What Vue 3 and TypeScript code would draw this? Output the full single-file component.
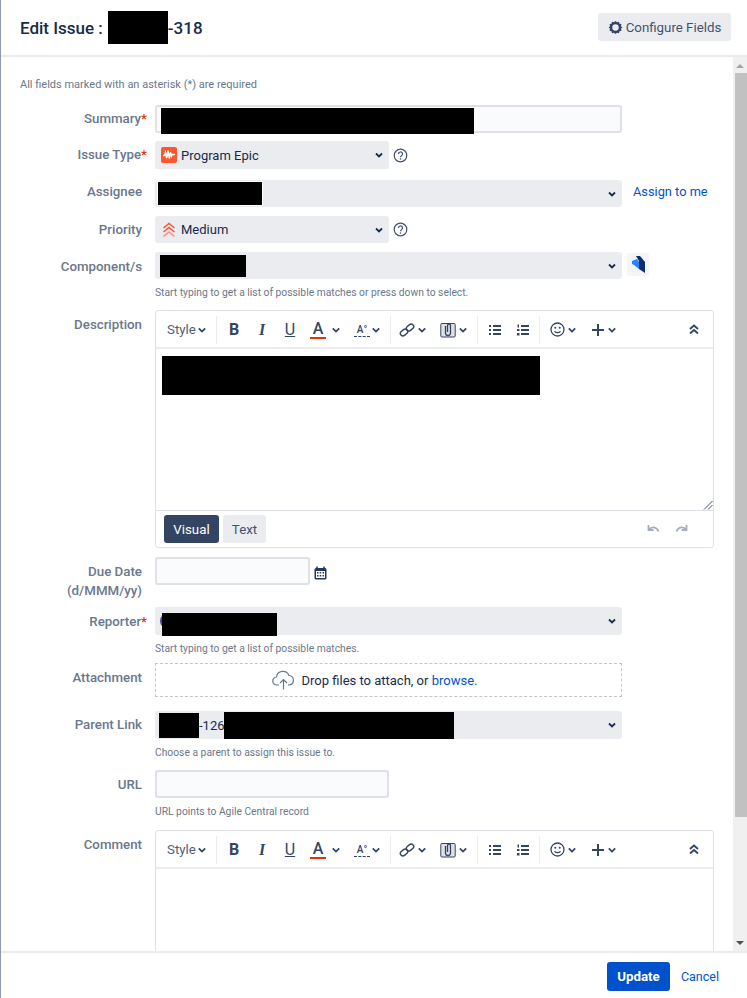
<template>
  <div class="dialog">
    <header class="top">
      <h1>Edit Issue :<span class="redact title-redact"></span>-318</h1>
      <button class="config">
        <svg width="15" height="15" viewBox="0 0 16 16"><path d="M8 1l1.600 1.500 2.100-.6.600 2.100 2.100.6-.6 2.100L15.300 8l-1.500 1.300.6 2.100-2.100.6-.6 2.100-2.100-.6L8 15l-1.600-1.500-2.100.6-.6-2.100-2.100-.6.6-2.100L.7 8l1.500-1.300-.6-2.100 2.100-.6.6-2.100 2.100.6z" fill="#344563"/><circle cx="8" cy="8" r="3.400" fill="#ebecf0"/></svg>
        Configure Fields
      </button>
    </header>

    <div class="middle">
      <main class="body">
        <p class="required-note">All fields marked with an asterisk (*) are required</p>

        <div class="row summary-row">
          <label>Summary<em>*</em></label>
          <div class="input wide"><span class="redact summary-redact"></span></div>
        </div>

        <div class="row issue-row">
          <label>Issue Type<em>*</em></label>
          <div class="select narrow">
            <svg class="type-icon" width="16" height="16" viewBox="0 0 16 16"><rect width="16" height="16" rx="2" fill="#ff5630"/><path d="M2 8.500h1.500l1-3 1.200 5.500L7 3.500l1.300 8 1.200-6 1 3.500.8-1.500H14" fill="none" stroke="#fff" stroke-width="1.500"/></svg>
            <span>Program Epic</span>
            <svg class="chev" width="10" height="10" viewBox="0 0 10 10"><path d="M2 3.500l3 3 3-3" fill="none" stroke="#172b4d" stroke-width="1.800"/></svg>
          </div>
          <svg class="help" width="15" height="15" viewBox="0 0 15 15"><circle cx="7.500" cy="7.500" r="6.300" fill="none" stroke="#42526e" stroke-width="1.200"/><path d="M5.500 6a2 2 0 1 1 3 1.700c-.7.400-1 .7-1 1.500" fill="none" stroke="#42526e" stroke-width="1.200"/><circle cx="7.500" cy="11" r=".8" fill="#42526e"/></svg>
        </div>

        <div class="row assignee-row">
          <label>Assignee</label>
          <div class="select wide">
            <span class="redact assignee-redact"></span>
            <svg class="chev" width="10" height="10" viewBox="0 0 10 10"><path d="M2 3.500l3 3 3-3" fill="none" stroke="#172b4d" stroke-width="1.800"/></svg>
          </div>
          <a class="side-link">Assign to me</a>
        </div>

        <div class="row priority-row">
          <label>Priority</label>
          <div class="select narrow">
            <svg class="type-icon" width="16" height="16" viewBox="0 0 16 16"><g fill="none" stroke="#ff5630" stroke-width="1.600"><path d="M2.500 6L8 1.500 13.500 6"/><path d="M2.500 10L8 5.500 13.500 10"/><path d="M2.500 14.500L8 10l5.500 4.500" stroke="#ff8f73"/></g></svg>
            <span>Medium</span>
            <svg class="chev" width="10" height="10" viewBox="0 0 10 10"><path d="M2 3.500l3 3 3-3" fill="none" stroke="#172b4d" stroke-width="1.800"/></svg>
          </div>
          <svg class="help" width="15" height="15" viewBox="0 0 15 15"><circle cx="7.500" cy="7.500" r="6.300" fill="none" stroke="#42526e" stroke-width="1.200"/><path d="M5.500 6a2 2 0 1 1 3 1.700c-.7.400-1 .7-1 1.500" fill="none" stroke="#42526e" stroke-width="1.200"/><circle cx="7.500" cy="11" r=".8" fill="#42526e"/></svg>
        </div>

        <div class="row component-row">
          <label>Component/s</label>
          <div class="select wide">
            <span class="redact component-redact"></span>
            <svg class="chev" width="10" height="10" viewBox="0 0 10 10"><path d="M2 3.500l3 3 3-3" fill="none" stroke="#172b4d" stroke-width="1.800"/></svg>
          </div>
          <span class="component-badge">
            <svg width="14" height="17" viewBox="0 0 14 17"><path d="M5 0h4l5 6v11l-6-4V5z" fill="#0c2f6e"/><path d="M1 5l5-2 2 3v7L3 9 1 8z" fill="#2684ff"/></svg>
          </span>
        </div>
        <p class="hint">Start typing to get a list of possible matches or press down to select.</p>

        <div class="row description-row">
          <label>Description</label>
          <div class="editor">
            <div class="toolbar">
              <span class="tb-style">Style<svg class="mini" width="8" height="8" viewBox="0 0 10 10"><path d="M1 3l4 4 4-4" fill="none" stroke="#344563" stroke-width="2.200"/></svg></span>
              <i class="sep"></i>
              <span class="tb-glyph bold">B</span>
              <span class="tb-glyph italic">I</span>
              <span class="tb-glyph under">U</span>
              <span class="tb-glyph color"><b>A</b><svg class="mini" width="8" height="8" viewBox="0 0 10 10"><path d="M1 3l4 4 4-4" fill="none" stroke="#344563" stroke-width="2.200"/></svg></span>
              <span class="tb-glyph more"><b>A°</b><svg class="mini" width="8" height="8" viewBox="0 0 10 10"><path d="M1 3l4 4 4-4" fill="none" stroke="#344563" stroke-width="2.200"/></svg></span>
              <i class="sep"></i>
              <span class="tb-icon link-btn"><svg width="16" height="16" viewBox="0 0 16 16"><g fill="none" stroke="#344563" stroke-width="1.400"><rect x="1" y="8" width="8" height="5" rx="2.500" transform="rotate(-40 5 10.500)"/><rect x="7" y="3" width="8" height="5" rx="2.500" transform="rotate(-40 11 5.500)"/></g></svg><svg class="mini" width="8" height="8" viewBox="0 0 10 10"><path d="M1 3l4 4 4-4" fill="none" stroke="#344563" stroke-width="2.200"/></svg></span>
              <span class="tb-icon"><svg width="16" height="16" viewBox="0 0 16 16"><rect x=".8" y="1.500" width="14.400" height="13.500" rx="1" fill="#dfe1e6" stroke="#344563"/><path d="M5.500 4v7a2.500 2.500 0 0 0 5 0V3.500a1.500 1.500 0 0 0-3 0V10" fill="none" stroke="#344563" stroke-width="1.300"/></svg><svg class="mini" width="8" height="8" viewBox="0 0 10 10"><path d="M1 3l4 4 4-4" fill="none" stroke="#344563" stroke-width="2.200"/></svg></span>
              <i class="sep"></i>
              <span class="tb-icon"><svg width="14" height="14" viewBox="0 0 14 14"><g fill="#344563"><rect x="1" y="2" width="2" height="2"/><rect x="1" y="6" width="2" height="2"/><rect x="1" y="10" width="2" height="2"/><rect x="5" y="2" width="8" height="2"/><rect x="5" y="6" width="8" height="2"/><rect x="5" y="10" width="8" height="2"/></g></svg></span>
              <span class="tb-icon solo"><svg width="14" height="14" viewBox="0 0 14 14"><g fill="#344563"><rect x="1.500" y="1.500" width="1.500" height="3"/><rect x="1" y="6" width="2.500" height="2"/><rect x="1" y="10" width="2.500" height="2.500"/><rect x="5" y="2" width="8" height="2"/><rect x="5" y="6" width="8" height="2"/><rect x="5" y="10" width="8" height="2"/></g></svg></span>
              <i class="sep"></i>
              <span class="tb-icon"><svg width="15" height="15" viewBox="0 0 15 15"><circle cx="7.500" cy="7.500" r="6.500" fill="none" stroke="#344563" stroke-width="1.300"/><circle cx="5.300" cy="5.800" r="1" fill="#344563"/><circle cx="9.700" cy="5.800" r="1" fill="#344563"/><path d="M4.500 9.300c1.500 1.800 4.500 1.800 6 0" fill="none" stroke="#344563" stroke-width="1.200"/></svg><svg class="mini" width="8" height="8" viewBox="0 0 10 10"><path d="M1 3l4 4 4-4" fill="none" stroke="#344563" stroke-width="2.200"/></svg></span>
              <span class="tb-icon plus-btn"><svg width="14" height="14" viewBox="0 0 14 14"><path d="M7 1v12M1 7h12" stroke="#344563" stroke-width="2"/></svg><svg class="mini" width="8" height="8" viewBox="0 0 10 10"><path d="M1 3l4 4 4-4" fill="none" stroke="#344563" stroke-width="2.200"/></svg></span>
              <span class="collapse"><svg width="10" height="11" viewBox="0 0 10 11"><path d="M1 5l4-3.500L9 5M1 9.500L5 6l4 3.500" fill="none" stroke="#344563" stroke-width="1.800"/></svg></span>
            </div>
            <div class="edit-area">
              <span class="redact description-redact"></span>
              <svg class="grip" width="10" height="10" viewBox="0 0 10 10"><path d="M1 9.500L9.500 1M5 9.500L9.500 5" stroke="#42526e"/></svg>
            </div>
            <div class="editor-foot">
              <button class="tab active">Visual</button>
              <button class="tab">Text</button>
              <span class="history">
                <svg width="15" height="10" viewBox="0 0 15 10"><path d="M2.500 1v5h5M2.500 6c3-4 8-3.500 10 1.500" fill="none" stroke="#a5adba" stroke-width="1.800"/></svg>
                <svg width="15" height="10" viewBox="0 0 15 10"><path d="M12.500 1v5h-5M12.500 6c-3-4-8-3.500-10 1.500" fill="none" stroke="#a5adba" stroke-width="1.800"/></svg>
              </span>
            </div>
          </div>
        </div>

        <div class="row due-row">
          <label>Due Date<br>(d/MMM/yy)</label>
          <div class="input date"></div>
          <svg class="cal" width="13" height="14" viewBox="0 0 13 14"><rect x=".5" y="2" width="12" height="11.500" rx="1.500" fill="#253858"/><rect x="2" y="5" width="9" height="7" fill="#fff"/><path d="M3 .5v2M10 .5v2" stroke="#253858" stroke-width="1.500"/><g fill="#253858"><rect x="3" y="6" width="1.500" height="1.500"/><rect x="5.700" y="6" width="1.500" height="1.500"/><rect x="8.500" y="6" width="1.500" height="1.500"/><rect x="3" y="9" width="1.500" height="1.500"/><rect x="5.700" y="9" width="1.500" height="1.500"/><rect x="8.500" y="9" width="1.500" height="1.500"/></g></svg>
        </div>

        <div class="row reporter-row">
          <label>Reporter<em>*</em></label>
          <div class="select wide">
            <span class="avatar"></span>
            <span class="redact reporter-redact"></span>
            <svg class="chev" width="10" height="10" viewBox="0 0 10 10"><path d="M2 3.500l3 3 3-3" fill="none" stroke="#172b4d" stroke-width="1.800"/></svg>
          </div>
        </div>
        <p class="hint">Start typing to get a list of possible matches.</p>

        <div class="row attach-row">
          <label>Attachment</label>
          <div class="dropzone">
            <svg width="23" height="20" viewBox="0 0 23 20"><path d="M7 15H5a4 4 0 0 1-.5-8A6.500 6.500 0 0 1 17 5.500a4.800 4.800 0 0 1 .5 9.500H16" fill="none" stroke="#6b778c" stroke-width="1.200"/><path d="M11.500 19.500v-10M8 13l3.500-3.500L15 13" fill="none" stroke="#6b778c" stroke-width="1.200"/></svg>
            <span>Drop files to attach, or <a>browse.</a></span>
          </div>
        </div>

        <div class="row parent-row">
          <label>Parent Link</label>
          <div class="select wide">
            <span class="redact parent-a"></span><span class="parent-key">-126</span><span class="redact parent-b"></span>
            <svg class="chev" width="10" height="10" viewBox="0 0 10 10"><path d="M2 3.500l3 3 3-3" fill="none" stroke="#172b4d" stroke-width="1.800"/></svg>
          </div>
        </div>
        <p class="hint">Choose a parent to assign this issue to.</p>

        <div class="row url-row">
          <label>URL</label>
          <div class="input narrow"></div>
        </div>
        <p class="hint">URL points to Agile Central record</p>

        <div class="row comment-row">
          <label>Comment</label>
          <div class="editor comment">
            <div class="toolbar">
              <span class="tb-style">Style<svg class="mini" width="8" height="8" viewBox="0 0 10 10"><path d="M1 3l4 4 4-4" fill="none" stroke="#344563" stroke-width="2.200"/></svg></span>
              <i class="sep"></i>
              <span class="tb-glyph bold">B</span>
              <span class="tb-glyph italic">I</span>
              <span class="tb-glyph under">U</span>
              <span class="tb-glyph color"><b>A</b><svg class="mini" width="8" height="8" viewBox="0 0 10 10"><path d="M1 3l4 4 4-4" fill="none" stroke="#344563" stroke-width="2.200"/></svg></span>
              <span class="tb-glyph more"><b>A°</b><svg class="mini" width="8" height="8" viewBox="0 0 10 10"><path d="M1 3l4 4 4-4" fill="none" stroke="#344563" stroke-width="2.200"/></svg></span>
              <i class="sep"></i>
              <span class="tb-icon link-btn"><svg width="16" height="16" viewBox="0 0 16 16"><g fill="none" stroke="#344563" stroke-width="1.400"><rect x="1" y="8" width="8" height="5" rx="2.500" transform="rotate(-40 5 10.500)"/><rect x="7" y="3" width="8" height="5" rx="2.500" transform="rotate(-40 11 5.500)"/></g></svg><svg class="mini" width="8" height="8" viewBox="0 0 10 10"><path d="M1 3l4 4 4-4" fill="none" stroke="#344563" stroke-width="2.200"/></svg></span>
              <span class="tb-icon"><svg width="16" height="16" viewBox="0 0 16 16"><rect x=".8" y="1.500" width="14.400" height="13.500" rx="1" fill="#dfe1e6" stroke="#344563"/><path d="M5.500 4v7a2.500 2.500 0 0 0 5 0V3.500a1.500 1.500 0 0 0-3 0V10" fill="none" stroke="#344563" stroke-width="1.300"/></svg><svg class="mini" width="8" height="8" viewBox="0 0 10 10"><path d="M1 3l4 4 4-4" fill="none" stroke="#344563" stroke-width="2.200"/></svg></span>
              <i class="sep"></i>
              <span class="tb-icon"><svg width="14" height="14" viewBox="0 0 14 14"><g fill="#344563"><rect x="1" y="2" width="2" height="2"/><rect x="1" y="6" width="2" height="2"/><rect x="1" y="10" width="2" height="2"/><rect x="5" y="2" width="8" height="2"/><rect x="5" y="6" width="8" height="2"/><rect x="5" y="10" width="8" height="2"/></g></svg></span>
              <span class="tb-icon solo"><svg width="14" height="14" viewBox="0 0 14 14"><g fill="#344563"><rect x="1.500" y="1.500" width="1.500" height="3"/><rect x="1" y="6" width="2.500" height="2"/><rect x="1" y="10" width="2.500" height="2.500"/><rect x="5" y="2" width="8" height="2"/><rect x="5" y="6" width="8" height="2"/><rect x="5" y="10" width="8" height="2"/></g></svg></span>
              <i class="sep"></i>
              <span class="tb-icon"><svg width="15" height="15" viewBox="0 0 15 15"><circle cx="7.500" cy="7.500" r="6.500" fill="none" stroke="#344563" stroke-width="1.300"/><circle cx="5.300" cy="5.800" r="1" fill="#344563"/><circle cx="9.700" cy="5.800" r="1" fill="#344563"/><path d="M4.500 9.300c1.500 1.800 4.500 1.800 6 0" fill="none" stroke="#344563" stroke-width="1.200"/></svg><svg class="mini" width="8" height="8" viewBox="0 0 10 10"><path d="M1 3l4 4 4-4" fill="none" stroke="#344563" stroke-width="2.200"/></svg></span>
              <span class="tb-icon plus-btn"><svg width="14" height="14" viewBox="0 0 14 14"><path d="M7 1v12M1 7h12" stroke="#344563" stroke-width="2"/></svg><svg class="mini" width="8" height="8" viewBox="0 0 10 10"><path d="M1 3l4 4 4-4" fill="none" stroke="#344563" stroke-width="2.200"/></svg></span>
              <span class="collapse"><svg width="10" height="11" viewBox="0 0 10 11"><path d="M1 5l4-3.500L9 5M1 9.500L5 6l4 3.500" fill="none" stroke="#344563" stroke-width="1.800"/></svg></span>
            </div>
            <div class="edit-area"></div>
          </div>
        </div>
      </main>

      <div class="scrollbar">
        <span class="arrow up"></span>
        <span class="thumb"></span>
        <span class="arrow down"></span>
      </div>
    </div>

    <footer class="bottom">
      <button class="update">Update</button>
      <a class="cancel">Cancel</a>
    </footer>
  </div>
</template>

<script setup lang="ts">
</script>

<style>
html, body {
  margin: 0;
  background: #fff;
}
</style>

<style scoped>
.dialog {
  width: 747px;
  height: 998px;
  box-sizing: border-box;
  border-left: 1px solid #8f9bb3;
  display: flex;
  flex-direction: column;
  overflow: hidden;
  font-family: Roboto, "Noto Sans", sans-serif;
  font-size: 13.300px;
  color: #172b4d;
  background: #fff;
}

.top {
  height: 57px;
  flex: none;
  box-sizing: border-box;
  border-bottom: 2px solid #ebecf0;
  display: flex;
  align-items: center;
  justify-content: space-between;
  padding: 0 16px 0 19px;
}
h1 {
  margin: 0;
  font-size: 17px;
  font-weight: 500;
  display: flex;
  align-items: center;
  color: #172b4d;
}
.redact {
  display: inline-block;
  background: #000;
  flex: none;
}
.title-redact {
  width: 60px;
  height: 33px;
  margin: 0 0 0 5px;
}
.config {
  height: 28px;
  width: 133px;
  margin-top: -1px;
  padding: 0;
  border: 0;
  border-radius: 3px;
  background: #ebecf0;
  color: #42526e;
  font: inherit;
  display: flex;
  align-items: center;
  justify-content: center;
  gap: 3px;
}

.middle {
  flex: 1;
  min-height: 0;
  display: flex;
}
.body {
  flex: 1;
  min-width: 0;
  overflow: hidden;
  padding-right: 19px;
}
.required-note {
  margin: 20px 0 0 19px;
  height: 15px;
  line-height: 15px;
  font-size: 11px;
  color: #6b778c;
}

.row {
  display: flex;
  align-items: flex-start;
}
label {
  flex: none;
  width: 141px;
  margin-right: 13px;
  text-align: right;
  line-height: 19px;
  padding-top: 5px;
  color: #6b778c;
  font-weight: 500;
}
label em {
  color: #de350b;
  font-style: normal;
  margin-right: -5px;
}
.input {
  box-sizing: border-box;
  height: 28px;
  border: 2px solid #dfe1e6;
  border-radius: 3px;
  background: #fafbfc;
  display: flex;
  align-items: flex-start;
  padding-left: 4px;
}
.select {
  box-sizing: border-box;
  height: 28px;
  border-radius: 3px;
  background: #ebecf0;
  display: flex;
  align-items: center;
  padding-left: 6px;
  font-size: 13px;
}
.wide {
  width: 467px;
}
.narrow {
  width: 234px;
}
.date {
  width: 155px;
}
.chev {
  margin-left: auto;
  margin-right: 5px;
  flex: none;
}
.type-icon {
  margin-right: 4px;
  flex: none;
}
.help {
  margin: 7px 0 0 4px;
  flex: none;
}
.priority-row .help {
  margin-top: 6px;
}
.side-link {
  margin: 2px 0 0 11px;
  line-height: 20px;
  font-size: 12.800px;
  color: #0052cc;
}
.component-badge {
  width: 22px;
  height: 23px;
  margin: 1px 0 0 5px;
  background: #f4f5f7;
  border-radius: 3px;
  display: flex;
  align-items: center;
  justify-content: center;
}

.summary-row { margin-top: 13px; }
.issue-row { margin-top: 8px; }
.assignee-row { margin-top: 11px; }
.priority-row { margin-top: 9px; }
.component-row { margin-top: 9px; }
.description-row { margin-top: 11px; }
.due-row { margin-top: 9px; }
.reporter-row { margin-top: 7px; }
.attach-row { margin-top: 8px; }
.parent-row { margin-top: 14px; }
.url-row { margin-top: 11px; }
.comment-row { margin-top: 12px; }

.assignee-row .select,
.priority-row .select,
.component-row .select {
  height: 27px;
}
.summary-row label,
.issue-row label,
.priority-row label,
.parent-row label {
  padding-top: 4px;
}
.assignee-row label {
  padding-top: 2px;
}

.hint {
  margin: 7px 0 0 154px;
  height: 13px;
  line-height: 14px;
  font-size: 10.300px;
  color: #6b778c;
}

.summary-redact { width: 313px; height: 26px; margin-top: 1px; }
.assignee-redact { width: 104px; height: 23px; margin-left: -3px; box-shadow: 0 0 0 1px #fff; }
.component-redact { width: 86px; height: 22px; margin-left: -1px; }
.description-redact { width: 378px; height: 39px; margin: 7px 0 0 6px; }
.avatar {
  width: 16px;
  height: 16px;
  border-radius: 50%;
  background: #5243aa;
  flex: none;
  margin-left: -1px;
  margin-right: -14px;
}
.reporter-redact { width: 115px; height: 23px; margin: 7px 0 0 0; position: relative; }
.parent-a { width: 40px; height: 25px; margin-left: -2px; }
.parent-key { width: 25px; flex: none; }
.parent-b { width: 230px; height: 27px; }

.editor {
  box-sizing: border-box;
  width: 559px;
  border: 1px solid #dfe1e6;
  border-radius: 3px;
  height: 238px;
  display: flex;
  flex-direction: column;
}
.comment {
  flex: none;
}
.toolbar {
  height: 38px;
  flex: none;
  box-sizing: border-box;
  border-bottom: 2px solid #ebecf0;
  display: flex;
  align-items: center;
  color: #344563;
  padding: 1px 0 0 11px;
}
.tb-style {
  display: flex;
  align-items: center;
  gap: 2px;
  color: #505f79;
  width: 49px;
  flex: none;
}
.sep {
  width: 1px;
  height: 28px;
  background: #ebecf0;
  flex: none;
}
.tb-glyph {
  display: flex;
  align-items: center;
  justify-content: center;
  font-size: 16px;
  color: #344563;
  height: 24px;
  flex: none;
}
.tb-glyph b {
  font-weight: 500;
}
.bold { font-weight: 700; margin-left: 9px; width: 16px; }
.italic {
  font-family: "Liberation Serif", serif;
  font-style: italic;
  font-weight: 700;
  margin-left: 12px;
  width: 16px;
}
.under { text-decoration: underline; margin-left: 12px; width: 16px; }
.color { margin-left: 12px; gap: 6px; }
.color b {
  width: 16px;
  text-align: center;
  line-height: 16px;
  border-bottom: 2px solid #de350b;
}
.more { margin-left: 14px; gap: 2px; margin-right: 10px; }
.more b {
  width: 16px;
  font-size: 10px;
  line-height: 13px;
  text-align: center;
  border-bottom: 1px dashed #344563;
}
.tb-icon {
  display: flex;
  align-items: center;
  gap: 3px;
  margin-left: 14px;
  flex: none;
}
.sep + .tb-icon {
  margin-left: 10px;
}
.sep + .link-btn {
  margin-left: 8px;
}
.tb-icon + .sep {
  margin-left: 10px;
}
.solo + .sep {
  margin-left: 9px;
}
.plus-btn {
  margin-left: 15px;
}
.collapse {
  margin-left: auto;
  margin-right: 14px;
  display: flex;
}
.edit-area {
  flex: 1;
  position: relative;
  min-height: 0;
}
.grip {
  position: absolute;
  right: 0;
  bottom: 0;
}
.editor-foot {
  height: 37px;
  flex: none;
  box-sizing: border-box;
  border-top: 1px solid #dfe1e6;
  display: flex;
  align-items: center;
  padding-left: 8px;
  gap: 4px;
}
.tab {
  height: 28px;
  width: 43px;
  padding: 0;
  border: 0;
  border-radius: 3px;
  background: #ebecf0;
  color: #42526e;
  font: inherit;
}
.tab.active {
  background: #344563;
  color: #fff;
  width: 55px;
}
.history {
  margin-left: auto;
  margin-right: 24px;
  display: flex;
  gap: 13px;
}

.cal {
  margin: 9px 0 0 4px;
  flex: none;
}

.dropzone {
  box-sizing: border-box;
  width: 467px;
  height: 34px;
  border: 1px dashed #c1c7d0;
  display: flex;
  align-items: center;
  justify-content: center;
  gap: 7px;
  padding-right: 28px;
  font-size: 13px;
  color: #172b4d;
}
.dropzone a {
  color: #0052cc;
}

.scrollbar {
  width: 14px;
  flex: none;
  background: #f0f0f0;
  display: flex;
  flex-direction: column;
  align-items: center;
}
.arrow {
  width: 0;
  height: 0;
  flex: none;
  border-left: 4px solid transparent;
  border-right: 4px solid transparent;
}
.up {
  margin-top: 7px;
  border-bottom: 4px solid #a3a3a3;
}
.down {
  margin-top: auto;
  margin-bottom: 6px;
  border-top: 4px solid #505050;
}
.thumb {
  width: 12px;
  height: 744px;
  margin-top: 5px;
  align-self: flex-end;
  background: #c1c1c1;
}

.bottom {
  height: 47px;
  flex: none;
  box-sizing: border-box;
  border-top: 2px solid #ebecf0;
  display: flex;
  align-items: center;
  justify-content: flex-end;
  padding: 2px 28px 0 0;
  gap: 11px;
}
.update {
  width: 63px;
  height: 29px;
  border: 0;
  border-radius: 3px;
  background: #0052cc;
  color: #fff;
  font: inherit;
  font-weight: 700;
}
.cancel {
  font-size: 12.500px;
  color: #0052cc;
}
</style>
